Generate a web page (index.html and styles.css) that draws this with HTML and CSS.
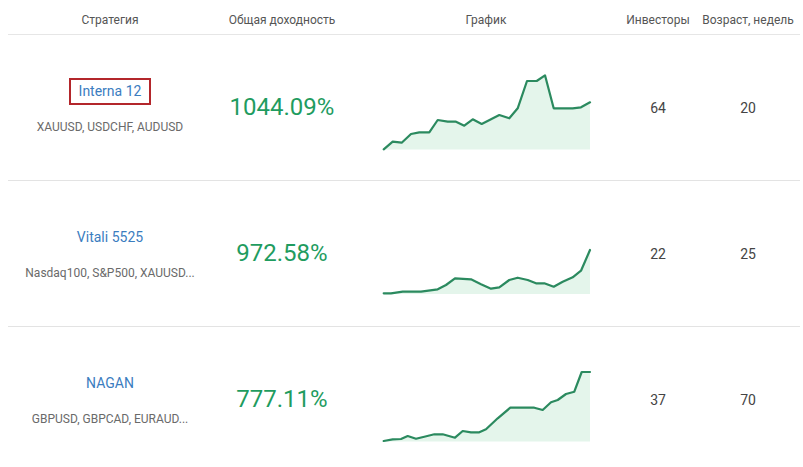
FILE: index.html
```html
<!DOCTYPE html>
<html lang="ru">
<head>
<meta charset="utf-8">
<title>Стратегии</title>
<link rel="stylesheet" href="styles.css">
</head>
<body>
<div class="table">
  <div class="row head">
    <div class="cell">Стратегия</div>
    <div class="cell">Общая доходность</div>
    <div class="cell">График</div>
    <div class="cell">Инвесторы</div>
    <div class="cell">Возраст, недель</div>
  </div>

  <div class="row">
    <div class="cell strat">
      <a class="name marked">Interna 12</a>
      <div class="pairs">XAUUSD, USDCHF, AUDUSD</div>
    </div>
    <div class="cell yield">1044.09%</div>
    <div class="cell chart">
      <svg width="210" height="80" viewBox="0 0 210 80">
        <polygon class="area" points="1.7,78.3 10.7,70.7 19.7,71.7 29,63 37.3,61.3 47.3,61.3 55.7,49 65.7,50.7 74,50.7 82.3,54.7 90.7,48.3 99.7,53 109,48.3 117.3,44 127.3,47.3 135.7,37.3 145,10 154.7,10 163,4.3 171.7,37.3 190.7,37.3 199,36.3 208,31.3 208,78.5 1.7,78.5"/>
        <polyline class="line" points="1.7,78.3 10.7,70.7 19.7,71.7 29,63 37.3,61.3 47.3,61.3 55.7,49 65.7,50.7 74,50.7 82.3,54.7 90.7,48.3 99.7,53 109,48.3 117.3,44 127.3,47.3 135.7,37.3 145,10 154.7,10 163,4.3 171.7,37.3 190.7,37.3 199,36.3 208,31.3"/>
      </svg>
    </div>
    <div class="cell num">64</div>
    <div class="cell num">20</div>
  </div>

  <div class="row">
    <div class="cell strat">
      <a class="name">Vitali 5525</a>
      <div class="pairs">Nasdaq100, S&amp;P500, XAUUSD...</div>
    </div>
    <div class="cell yield">972.58%</div>
    <div class="cell chart">
      <svg width="210" height="80" viewBox="0 0 210 80">
        <polygon class="area" points="1.7,76.3 9,76.3 20.7,74.7 39,74.7 55.7,72.3 64,68 73,61.3 89,62.3 99,67.3 109,71.7 117.3,70.3 127.3,63 135.7,60.7 145.7,63 154,66.3 162.3,66.3 171.7,69.7 180.7,64.7 190.7,60.3 199,53.7 208,33 208,77 1.7,77"/>
        <polyline class="line" points="1.7,76.3 9,76.3 20.7,74.7 39,74.7 55.7,72.3 64,68 73,61.3 89,62.3 99,67.3 109,71.7 117.3,70.3 127.3,63 135.7,60.7 145.7,63 154,66.3 162.3,66.3 171.7,69.7 180.7,64.7 190.7,60.3 199,53.7 208,33"/>
      </svg>
    </div>
    <div class="cell num">22</div>
    <div class="cell num">25</div>
  </div>

  <div class="row">
    <div class="cell strat">
      <a class="name">NAGAN</a>
      <div class="pairs">GBPUSD, GBPCAD, EURAUD...</div>
    </div>
    <div class="cell yield">777.11%</div>
    <div class="cell chart">
      <svg width="210" height="80" viewBox="0 0 210 80">
        <polygon class="area" points="1.7,78 10.7,76.3 19,76 25.7,73 34,75.7 42.3,73.7 52.3,71.3 60.7,71.3 73,74.7 80.7,68 89,69.3 97.3,69.3 104,66.3 115.7,55.3 128.3,44.7 152.3,44.7 160.7,47 169,39.3 175.7,37 184,31 192.3,28.7 199.7,9 208,9 208,78.5 1.7,78.5"/>
        <polyline class="line" points="1.7,78 10.7,76.3 19,76 25.7,73 34,75.7 42.3,73.7 52.3,71.3 60.7,71.3 73,74.7 80.7,68 89,69.3 97.3,69.3 104,66.3 115.7,55.3 128.3,44.7 152.3,44.7 160.7,47 169,39.3 175.7,37 184,31 192.3,28.7 199.7,9 208,9"/>
      </svg>
    </div>
    <div class="cell num">37</div>
    <div class="cell num">70</div>
  </div>
</div>
</body>
</html>
```

FILE: styles.css
```css
* { box-sizing: border-box; }
html, body { margin: 0; padding: 0; background: #fff; }
body {
  font-family: Roboto, "Noto Sans", "Liberation Sans", sans-serif;
  color: #444;
}
.table {
  width: 792px;
  margin-left: 8px;
}
.row {
  display: grid;
  grid-template-columns: 204px 140px 268px 76px 104px;
  height: 146px;
  border-bottom: 1px solid #e3e3e3;
}
.row.head {
  height: 35px;
  border-bottom: 1px solid #e6e6e6;
}
.cell {
  display: flex;
  align-items: center;
  justify-content: center;
  text-align: center;
}
.head .cell {
  font-size: 12px;
  line-height: 14px;
  color: #555;
  padding-top: 6px;
}
.strat {
  flex-direction: column;
  padding-bottom: 4px;
}
.name {
  font-size: 14px;
  line-height: 17px;
  color: #3b7dbf;
  padding: 3px 8px 3px;
  border: 2px solid transparent;
  margin-bottom: 15px;
}
.name.marked { border-color: #b3262b; }
.pairs {
  font-size: 12px;
  line-height: 14px;
  color: #6a6a6a;
}
.yield {
  font-size: 24px;
  color: #1f9c5f;
  padding-bottom: 1px;
}
.chart {
  align-items: flex-start;
  padding-top: 36px;
  padding-left: 2px;
}
.chart svg { display: block; }
.area { fill: #e4f5eb; stroke: none; }
.line {
  fill: none;
  stroke: #2b8a5f;
  stroke-width: 2.2;
  stroke-linejoin: round;
  stroke-linecap: round;
}
.num {
  font-size: 14px;
  color: #444;
  padding-top: 1px;
}
```
